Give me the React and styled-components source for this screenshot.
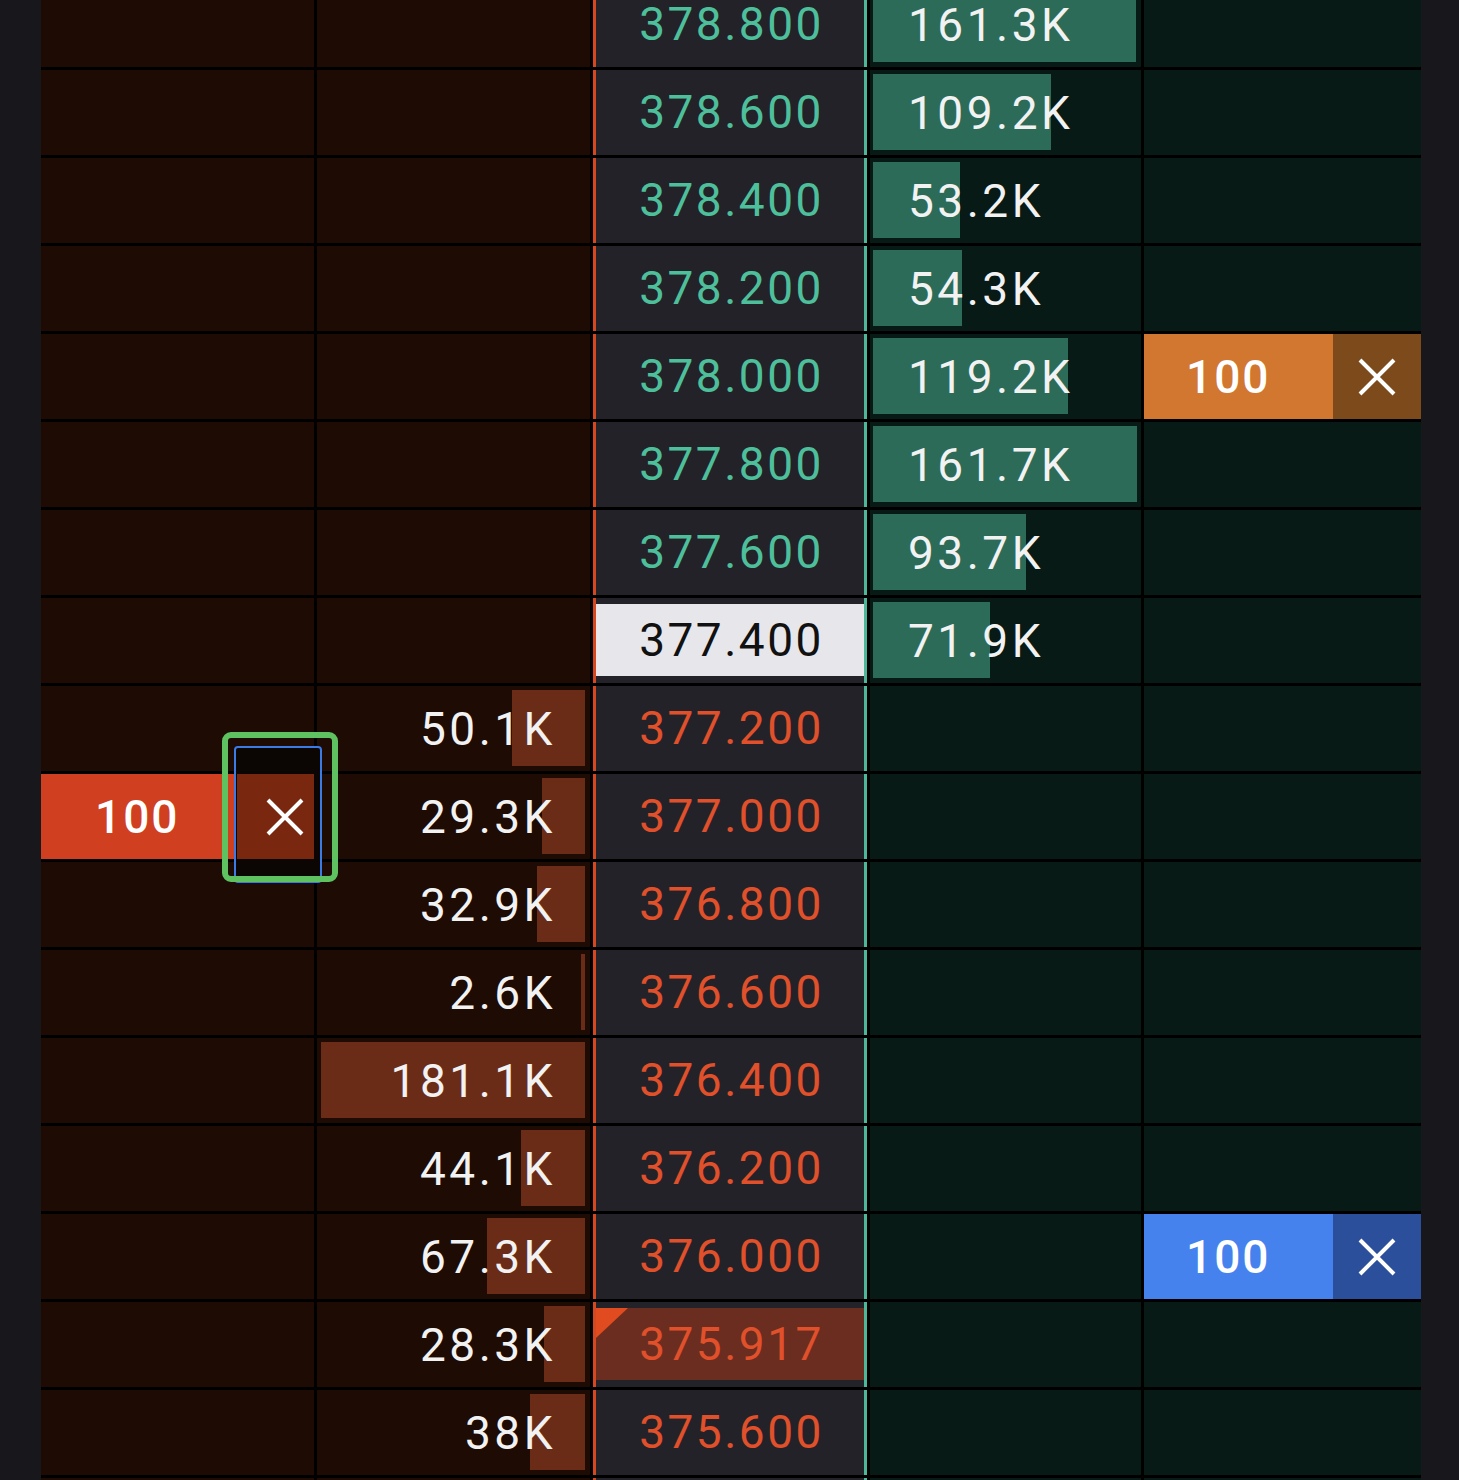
import React from 'react';
import styled, { createGlobalStyle } from 'styled-components';

const GlobalStyle = createGlobalStyle`
  html, body {
    margin: 0;
    padding: 0;
    background: #18171c;
    overflow: hidden;
  }
  body {
    font-family: Roboto, "Liberation Sans", sans-serif;
  }
`;

const BAR_MAX = 264;
const BID_MAX = 161.7;
const ASK_MAX = 181.1;

const rows = [
  { price: '378.800', bid: 161.3, label: '161.3K' },
  { price: '378.600', bid: 109.2, label: '109.2K' },
  { price: '378.400', bid: 53.2, label: '53.2K' },
  { price: '378.200', bid: 54.3, label: '54.3K' },
  { price: '378.000', bid: 119.2, label: '119.2K', buyOrder: 'orange' },
  { price: '377.800', bid: 161.7, label: '161.7K' },
  { price: '377.600', bid: 93.7, label: '93.7K' },
  { price: '377.400', bid: 71.9, label: '71.9K', last: true },
  { price: '377.200', ask: 50.1, label: '50.1K' },
  { price: '377.000', ask: 29.3, label: '29.3K', sellOrder: true },
  { price: '376.800', ask: 32.9, label: '32.9K' },
  { price: '376.600', ask: 2.6, label: '2.6K' },
  { price: '376.400', ask: 181.1, label: '181.1K' },
  { price: '376.200', ask: 44.1, label: '44.1K' },
  { price: '376.000', ask: 67.3, label: '67.3K', buyOrder: 'blue' },
  { price: '375.917', ask: 28.3, label: '28.3K', mark: true },
  { price: '375.600', ask: 38, label: '38K' },
  // next level, scrolled just past the bottom edge
  { price: '', ask: 0, label: '' },
];

const orderColors = {
  orange: { qty: '#d1772f', cancel: '#7d4a1c' },
  blue: { qty: '#4682ee', cancel: '#2c4f9b' },
  red: { qty: '#d03f1f', cancel: '#79270f' },
};

const Page = styled.div`
  height: 1480px;
  overflow: hidden;
  padding: 0 38px 0 41px;
`;

const Ladder = styled.div`
  width: 1380px;
  margin-top: -18px;
  background: #000;
  display: flex;
  flex-direction: column;
  gap: 3px;
`;

const Row = styled.div`
  position: relative;
  height: 85px;
  display: grid;
  grid-template-columns: 273px 273px 274px 271px 277px;
  column-gap: 3px;
`;

const SideCell = styled.div`
  position: relative;
  overflow: hidden;
  display: flex;
  align-items: center;
  justify-content: ${(p) => (p.$side === 'ask' ? 'flex-end' : 'flex-start')};
  background: ${(p) => (p.$side === 'ask' ? '#1d0b04' : '#071a16')};
  padding: ${(p) => (p.$side === 'ask' ? '0 34px 0 0' : '0 0 0 38px')};
`;

const OrderCell = styled(SideCell)`
  padding: 0;
  justify-content: flex-start;
  align-items: stretch;
`;

const VolBar = styled.div`
  position: absolute;
  top: 4px;
  bottom: 5px;
  ${(p) => (p.$side === 'ask' ? 'right: 5px;' : 'left: 3px;')}
  background: ${(p) => (p.$side === 'ask' ? '#6b2c17' : '#2c6b58')};
`;

const VolText = styled.span`
  position: relative;
  color: #f2f2f2;
  font-size: 46px;
  letter-spacing: 3.5px;
  line-height: 1;
`;

const PriceCell = styled.div`
  display: flex;
  padding: 6px 0 7px;
  background: #232229;
  border-left: 3px solid #d5471f;
  border-right: 3px solid #4cb899;
`;

const PriceBox = styled.div`
  position: relative;
  flex: 1;
  display: flex;
  align-items: center;
  justify-content: center;
  padding-left: 3px;
  background: ${(p) => p.$bg || 'transparent'};
  color: ${(p) => p.$color};
  font-size: 46px;
  letter-spacing: 2.5px;
  line-height: 1;
`;

const Marker = styled.div`
  position: absolute;
  top: 0;
  left: 0;
  width: 32px;
  height: 30px;
  background: #e04b1f;
  clip-path: polygon(0 0, 100% 0, 0 100%);
`;

const Order = styled.div`
  flex: 0 0 ${(p) => p.$width}px;
  display: flex;
`;

const OrderQty = styled.div`
  flex: 1;
  display: flex;
  align-items: center;
  padding-left: ${(p) => p.$pad}px;
  background: ${(p) => p.$color};
  color: #fff;
  font-size: 46px;
  font-weight: 500;
  letter-spacing: 2px;
  line-height: 1;
`;

const OrderCancel = styled.div`
  position: relative;
  z-index: 3;
  width: ${(p) => p.$width}px;
  flex-shrink: 0;
  display: flex;
  align-items: center;
  justify-content: center;
  background: ${(p) => p.$color};
`;

const FocusRing = styled.div`
  position: absolute;
  z-index: 2;
  left: 193px;
  top: -28px;
  width: 88px;
  height: 137px;
  box-sizing: border-box;
  border: 2px solid #3b7be6;
  border-radius: 4px;
  background: #0b0603;
`;

const Highlight = styled.div`
  position: absolute;
  z-index: 4;
  left: 181px;
  top: -42px;
  width: 116px;
  height: 150px;
  box-sizing: border-box;
  border: 6px solid #5fc260;
  border-radius: 9px;
`;

const CloseIcon = () => (
  <svg width="40" height="40" viewBox="0 0 40 40">
    <path d="M3 3 L37 37 M37 3 L3 37" stroke="#fff" strokeWidth="4" fill="none" />
  </svg>
);

const OrderTag = ({ tone, width, pad, cancelWidth }) => (
  <Order $width={width}>
    <OrderQty $color={orderColors[tone].qty} $pad={pad}>100</OrderQty>
    <OrderCancel $color={orderColors[tone].cancel} $width={cancelWidth}>
      <CloseIcon />
    </OrderCancel>
  </Order>
);

const LadderRow = ({ row }) => {
  const isBid = row.bid != null;
  const bidW = isBid ? (row.bid / BID_MAX) * BAR_MAX : 0;
  const askW = !isBid ? (row.ask / ASK_MAX) * BAR_MAX : 0;
  const priceColor = row.last ? '#111' : isBid ? '#4dbf9a' : '#e0502a';
  const priceBg = row.last ? '#e7e7eb' : row.mark ? '#6a2d20' : null;

  return (
    <Row>
      {row.sellOrder ? (
        <OrderCell $side="ask">
          {/* wider than the column: the cancel part is clipped at the edge */}
          <OrderTag tone="red" width={292} pad={54} cancelWidth={96} />
        </OrderCell>
      ) : (
        <SideCell $side="ask" />
      )}

      <SideCell $side="ask">
        {!isBid && askW > 0 && <VolBar $side="ask" style={{ width: askW }} />}
        {!isBid && row.label && <VolText>{row.label}</VolText>}
      </SideCell>

      <PriceCell>
        <PriceBox $color={priceColor} $bg={priceBg}>
          {row.mark && <Marker />}
          {row.price}
        </PriceBox>
      </PriceCell>

      <SideCell $side="bid">
        {isBid && <VolBar $side="bid" style={{ width: bidW }} />}
        {isBid && <VolText>{row.label}</VolText>}
      </SideCell>

      {row.buyOrder ? (
        <OrderCell $side="bid">
          <OrderTag tone={row.buyOrder} width={277} pad={42} cancelWidth={88} />
        </OrderCell>
      ) : (
        <SideCell $side="bid" />
      )}

      {row.sellOrder && (
        <>
          <FocusRing />
          <Highlight />
        </>
      )}
    </Row>
  );
};

export default function App() {
  return (
    <>
      <GlobalStyle />
      <Page>
        <Ladder>
          {rows.map((row, i) => (
            <LadderRow key={row.price || i} row={row} />
          ))}
        </Ladder>
      </Page>
    </>
  );
}
